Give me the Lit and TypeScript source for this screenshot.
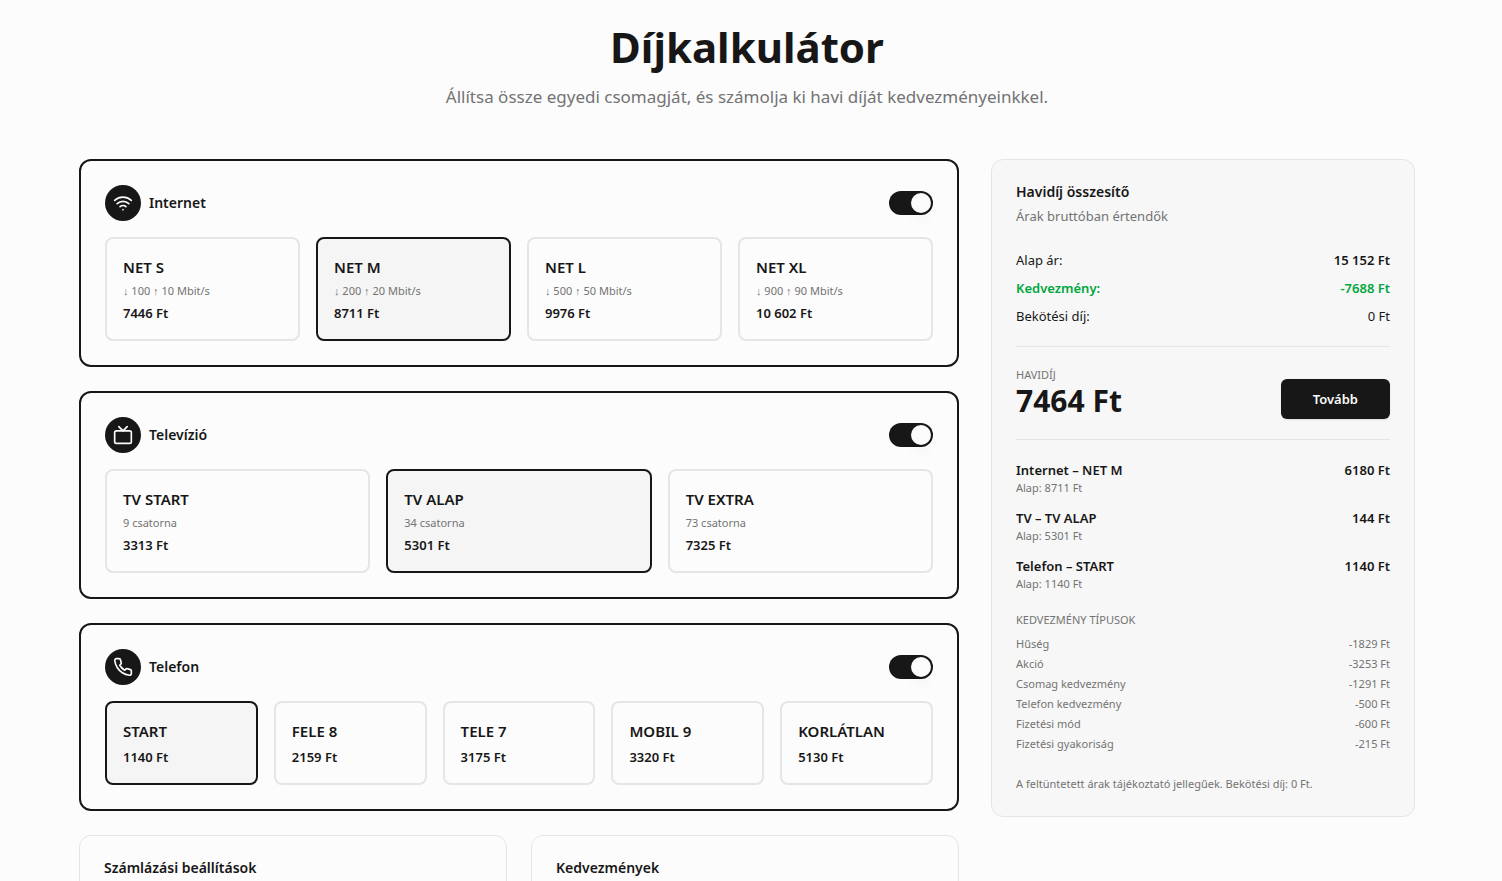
import { LitElement, html, css, svg } from "lit";
import { customElement, state } from "lit/decorators.js";

interface Plan {
  name: string;
  detail?: string;
  price: string;
}

interface Service {
  id: string;
  title: string;
  icon: unknown;
  plans: Plan[];
}

const wifiIcon = svg`<path d="M12 20h.01"/><path d="M2 8.82a15 15 0 0 1 20 0"/><path d="M5 12.859a10 10 0 0 1 14 0"/><path d="M8.5 16.429a5 5 0 0 1 7 0"/>`;
const tvIcon = svg`<path d="m17 2-5 5-5-5"/><rect width="20" height="15" x="2" y="7" rx="2"/>`;
const phoneIcon = svg`<path d="M22 16.92v3a2 2 0 0 1-2.18 2 19.79 19.79 0 0 1-8.63-3.07 19.5 19.5 0 0 1-6-6 19.79 19.79 0 0 1-3.07-8.67A2 2 0 0 1 4.11 2h3a2 2 0 0 1 2 1.72 12.84 12.84 0 0 0 .7 2.81 2 2 0 0 1-.45 2.11L8.09 9.91a16 16 0 0 0 6 6l1.27-1.27a2 2 0 0 1 2.11-.45 12.84 12.84 0 0 0 2.81.7A2 2 0 0 1 22 16.92z"/>`;

const services: Service[] = [
  {
    id: "internet",
    title: "Internet",
    icon: wifiIcon,
    plans: [
      { name: "NET S", detail: "↓ 100 ↑ 10 Mbit/s", price: "7446 Ft" },
      { name: "NET M", detail: "↓ 200 ↑ 20 Mbit/s", price: "8711 Ft" },
      { name: "NET L", detail: "↓ 500 ↑ 50 Mbit/s", price: "9976 Ft" },
      { name: "NET XL", detail: "↓ 900 ↑ 90 Mbit/s", price: "10 602 Ft" },
    ],
  },
  {
    id: "tv",
    title: "Televízió",
    icon: tvIcon,
    plans: [
      { name: "TV START", detail: "9 csatorna", price: "3313 Ft" },
      { name: "TV ALAP", detail: "34 csatorna", price: "5301 Ft" },
      { name: "TV EXTRA", detail: "73 csatorna", price: "7325 Ft" },
    ],
  },
  {
    id: "phone",
    title: "Telefon",
    icon: phoneIcon,
    plans: [
      { name: "START", price: "1140 Ft" },
      { name: "FELE 8", price: "2159 Ft" },
      { name: "TELE 7", price: "3175 Ft" },
      { name: "MOBIL 9", price: "3320 Ft" },
      { name: "KORLÁTLAN", price: "5130 Ft" },
    ],
  },
];

const lines = [
  { name: "Internet – NET M", base: "Alap: 8711 Ft", price: "6180 Ft" },
  { name: "TV – TV ALAP", base: "Alap: 5301 Ft", price: "144 Ft" },
  { name: "Telefon – START", base: "Alap: 1140 Ft", price: "1140 Ft" },
];

const discounts = [
  ["Hűség", "-1829 Ft"],
  ["Akció", "-3253 Ft"],
  ["Csomag kedvezmény", "-1291 Ft"],
  ["Telefon kedvezmény", "-500 Ft"],
  ["Fizetési mód", "-600 Ft"],
  ["Fizetési gyakoriság", "-215 Ft"],
];

@customElement("app-root")
export class AppRoot extends LitElement {
  @state() private selected: Record<string, number> = { internet: 1, tv: 1, phone: 0 };
  @state() private enabled: Record<string, boolean> = { internet: true, tv: true, phone: true };

  static styles = css`
    :host {
      display: block;
      box-sizing: border-box;
      min-height: 100vh;
      padding-right: 8px;
      background: #fcfcfc;
      color: #171717;
      font-family: "Noto Sans", "Open Sans", sans-serif;
      font-size: 15px;
      line-height: 24px;
    }
    *, *::before {
      box-sizing: border-box;
    }
    h1, h2, h3, p, dl, dd, ul {
      margin: 0;
      padding: 0;
    }
    ul {
      list-style: none;
    }
    button {
      font-family: inherit;
      color: inherit;
      cursor: pointer;
    }
    .page {
      max-width: 1400px;
      margin: 0 auto;
      padding: 23px 32px 0;
    }
    .header {
      display: flex;
      flex-direction: column;
      gap: 12px;
      margin-bottom: 48px;
      text-align: center;
    }
    .title {
      font-size: 42px;
      line-height: 48px;
      font-weight: 700;
    }
    .lead {
      font-size: 17px;
      line-height: 28px;
      color: #737373;
    }
    .layout {
      display: grid;
      grid-template-columns: repeat(3, minmax(0, 1fr));
      gap: 32px;
      align-items: start;
    }
    .builder {
      grid-column: span 2;
      display: flex;
      flex-direction: column;
      gap: 24px;
    }
    .service {
      display: flex;
      flex-direction: column;
      gap: 16px;
      padding: 24px;
      border: 2px solid #e5e5e5;
      border-radius: 12px;
    }
    .service.on {
      border-color: #171717;
    }
    .service-head {
      display: flex;
      align-items: center;
      gap: 8px;
    }
    .badge {
      display: flex;
      align-items: center;
      justify-content: center;
      width: 36px;
      height: 36px;
      border-radius: 50%;
      background: #171717;
      color: #fcfcfc;
    }
    .icon {
      width: 20px;
      height: 20px;
      fill: none;
      stroke: currentColor;
      stroke-width: 2;
      stroke-linecap: round;
      stroke-linejoin: round;
    }
    .name {
      flex: 1;
      font-size: 14px;
      line-height: 24px;
      font-weight: 600;
    }
    .switch {
      appearance: none;
      display: flex;
      justify-content: flex-start;
      width: 44px;
      height: 24px;
      margin: 0;
      padding: 2px;
      border-radius: 12px;
      background: #e5e5e5;
      cursor: pointer;
    }
    .switch::before {
      content: "";
      width: 20px;
      height: 20px;
      border-radius: 50%;
      background: #fcfcfc;
      box-shadow: 0 10px 15px -3px rgb(0 0 0 / 5%), 0 4px 6px -4px rgb(0 0 0 / 5%);
    }
    .switch:checked {
      justify-content: flex-end;
      background: #171717;
    }
    .plans {
      display: grid;
      grid-auto-flow: column;
      grid-auto-columns: minmax(0, 1fr);
      gap: 16px;
    }
    .plan {
      display: flex;
      flex-direction: column;
      gap: 4px;
      padding: 16px;
      border: 2px solid #e5e5e5;
      border-radius: 8px;
      background: none;
      text-align: left;
    }
    .plan.picked {
      border-color: #171717;
      background: #f5f5f5;
    }
    .plan-name {
      font-size: 15px;
      line-height: 24px;
      font-weight: 600;
    }
    .small {
      font-size: 11px;
      line-height: 16px;
      font-weight: 400;
      color: #737373;
    }
    .price {
      font-size: 13px;
      line-height: 20px;
      font-weight: 600;
    }
    .pair {
      display: grid;
      grid-template-columns: repeat(2, minmax(0, 1fr));
      gap: 24px;
    }
    .card {
      padding: 24px;
      border: 1px solid #e5e5e5;
      border-radius: 12px;
    }
    .card-title {
      font-size: 14px;
      line-height: 16px;
      font-weight: 600;
    }
    .summary {
      display: flex;
      flex-direction: column;
      gap: 20px;
      background: #f7f7f7;
    }
    .summary-head {
      display: flex;
      flex-direction: column;
      gap: 6px;
      margin-bottom: 4px;
    }
    .note {
      font-size: 13px;
      line-height: 20px;
      color: #737373;
    }
    .rows {
      display: flex;
      flex-direction: column;
      gap: 8px;
      font-size: 13px;
      line-height: 20px;
    }
    .row {
      display: flex;
      justify-content: space-between;
    }
    .strong {
      font-weight: 600;
    }
    .green {
      color: #00a63e;
      font-weight: 600;
    }
    .total {
      display: flex;
      align-items: flex-end;
      justify-content: space-between;
      padding: 20px 0;
      border: solid #e5e5e5;
      border-width: 1px 0;
    }
    .amount {
      font-size: 30px;
      line-height: 36px;
      font-weight: 700;
    }
    .next {
      height: 40px;
      padding: 0 32px;
      border: 0;
      border-radius: 6px;
      background: #171717;
      color: #fcfcfc;
      font-size: 13px;
      font-weight: 600;
      box-shadow: 0 1px 2px rgb(0 0 0 / 10%);
    }
    .lines {
      gap: 12px;
    }
    .types {
      gap: 4px;
    }
    .types-title {
      margin-bottom: 4px;
    }
    .footnote {
      margin-top: 4px;
    }
  `;

  private pick(id: string, index: number) {
    this.selected = { ...this.selected, [id]: index };
  }

  private toggle(id: string) {
    this.enabled = { ...this.enabled, [id]: !this.enabled[id] };
  }

  private renderService(s: Service) {
    return html`
      <section class="service ${this.enabled[s.id] ? "on" : ""}">
        <div class="service-head">
          <span class="badge"><svg class="icon" viewBox="0 0 24 24" aria-hidden="true">${s.icon}</svg></span>
          <label class="name" for=${s.id}>${s.title}</label>
          <input class="switch" type="checkbox" role="switch" id=${s.id}
            .checked=${this.enabled[s.id]} @change=${() => this.toggle(s.id)} />
        </div>
        <div class="plans">
          ${s.plans.map((p, i) => {
            const picked = this.selected[s.id] === i;
            return html`
              <button type="button" class="plan ${picked ? "picked" : ""}"
                aria-pressed=${picked} @click=${() => this.pick(s.id, i)}>
                <span class="plan-name">${p.name}</span>
                ${p.detail ? html`<span class="small">${p.detail}</span>` : null}
                <span class="price">${p.price}</span>
              </button>`;
          })}
        </div>
      </section>`;
  }

  render() {
    return html`
      <main class="page">
        <header class="header">
          <h1 class="title">Díjkalkulátor</h1>
          <p class="lead">Állítsa össze egyedi csomagját, és számolja ki havi díját kedvezményeinkkel.</p>
        </header>
        <div class="layout">
          <div class="builder">
            ${services.map((s) => this.renderService(s))}
            <div class="pair">
              <section class="card"><h2 class="card-title">Számlázási beállítások</h2></section>
              <section class="card"><h2 class="card-title">Kedvezmények</h2></section>
            </div>
          </div>
          <aside class="card summary">
            <div class="summary-head">
              <h2 class="card-title">Havidíj összesítő</h2>
              <p class="note">Árak bruttóban értendők</p>
            </div>
            <div class="rows">
              <div class="row"><span>Alap ár:</span><span class="strong">15 152 Ft</span></div>
              <div class="row green"><span>Kedvezmény:</span><span>-7688 Ft</span></div>
              <div class="row"><span>Bekötési díj:</span><span>0 Ft</span></div>
            </div>
            <div class="total">
              <div>
                <p class="small">HAVIDÍJ</p>
                <p class="amount">7464 Ft</p>
              </div>
              <button type="button" class="next">Tovább</button>
            </div>
            <ul class="rows lines">
              ${lines.map((l) => html`
                <li>
                  <div class="row strong"><span>${l.name}</span><span>${l.price}</span></div>
                  <p class="small">${l.base}</p>
                </li>`)}
            </ul>
            <div class="rows types">
              <h3 class="small types-title">KEDVEZMÉNY TÍPUSOK</h3>
              ${discounts.map(([name, value]) => html`
                <div class="row small"><span>${name}</span><span>${value}</span></div>`)}
            </div>
            <p class="small footnote">A feltüntetett árak tájékoztató jellegűek. Bekötési díj: 0 Ft.</p>
          </aside>
        </div>
      </main>`;
  }
}
